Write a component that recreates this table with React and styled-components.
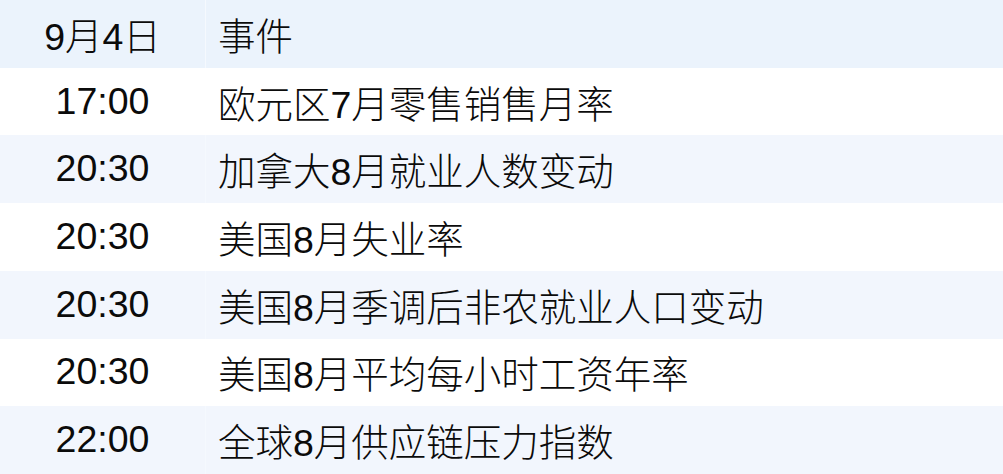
import React from "react";
import styled, { createGlobalStyle } from "styled-components";

const Global = createGlobalStyle`
  html, body { margin: 0; padding: 0; background: #ffffff; }
  body { font-family: "Liberation Sans", "Noto Sans CJK SC", Arial, sans-serif; }
`;

const Table = styled.div`
  display: grid;
  grid-template-columns: 206px 1fr;
  grid-auto-rows: 67.71px;
  width: 1003px;
  height: 474px;
  overflow: hidden;
`;

const bgFor = (variant) =>
  variant === "head" ? "#ebf3fc" : variant === "alt" ? "#f2f6fd" : "#ffffff";

const Cell = styled.div`
  display: flex;
  align-items: center;
  background: ${(p) => bgFor(p.$variant)};
  font-size: 37.5px;
  font-weight: 300;
  color: #0b0b0b;
  white-space: nowrap;
`;

const TimeCell = styled(Cell)`
  justify-content: center;
  border-right: 1px solid ${(p) => (p.$variant === "plain" ? "#ffffff" : "#f5f9fe")};
  padding-bottom: 1px;
`;

const EventCell = styled(Cell)`
  padding-left: 12px;
  padding-bottom: 1px;
`;

const Latin = styled.span`
  font-family: "Liberation Sans", Arial, sans-serif;
  font-weight: 400;
`;

const Mixed = ({ text }) => (
  <span>
    {text.split(/([0-9:]+)/).map((part, i) =>
      /^[0-9:]+$/.test(part) ? <Latin key={i}>{part}</Latin> : part
    )}
  </span>
);

const rows = [
  ["17:00", "欧元区7月零售销售月率"],
  ["20:30", "加拿大8月就业人数变动"],
  ["20:30", "美国8月失业率"],
  ["20:30", "美国8月季调后非农就业人口变动"],
  ["20:30", "美国8月平均每小时工资年率"],
  ["22:00", "全球8月供应链压力指数"],
];

export default function App() {
  return (
    <>
      <Global />
      <Table>
        <TimeCell $variant="head"><Mixed text="9月4日" /></TimeCell>
        <EventCell $variant="head">事件</EventCell>
        {rows.map(([t, e], i) => {
          const v = i % 2 === 0 ? "plain" : "alt";
          return (
            <React.Fragment key={i}>
              <TimeCell $variant={v}><Mixed text={t} /></TimeCell>
              <EventCell $variant={v}><Mixed text={e} /></EventCell>
            </React.Fragment>
          );
        })}
      </Table>
    </>
  );
}
